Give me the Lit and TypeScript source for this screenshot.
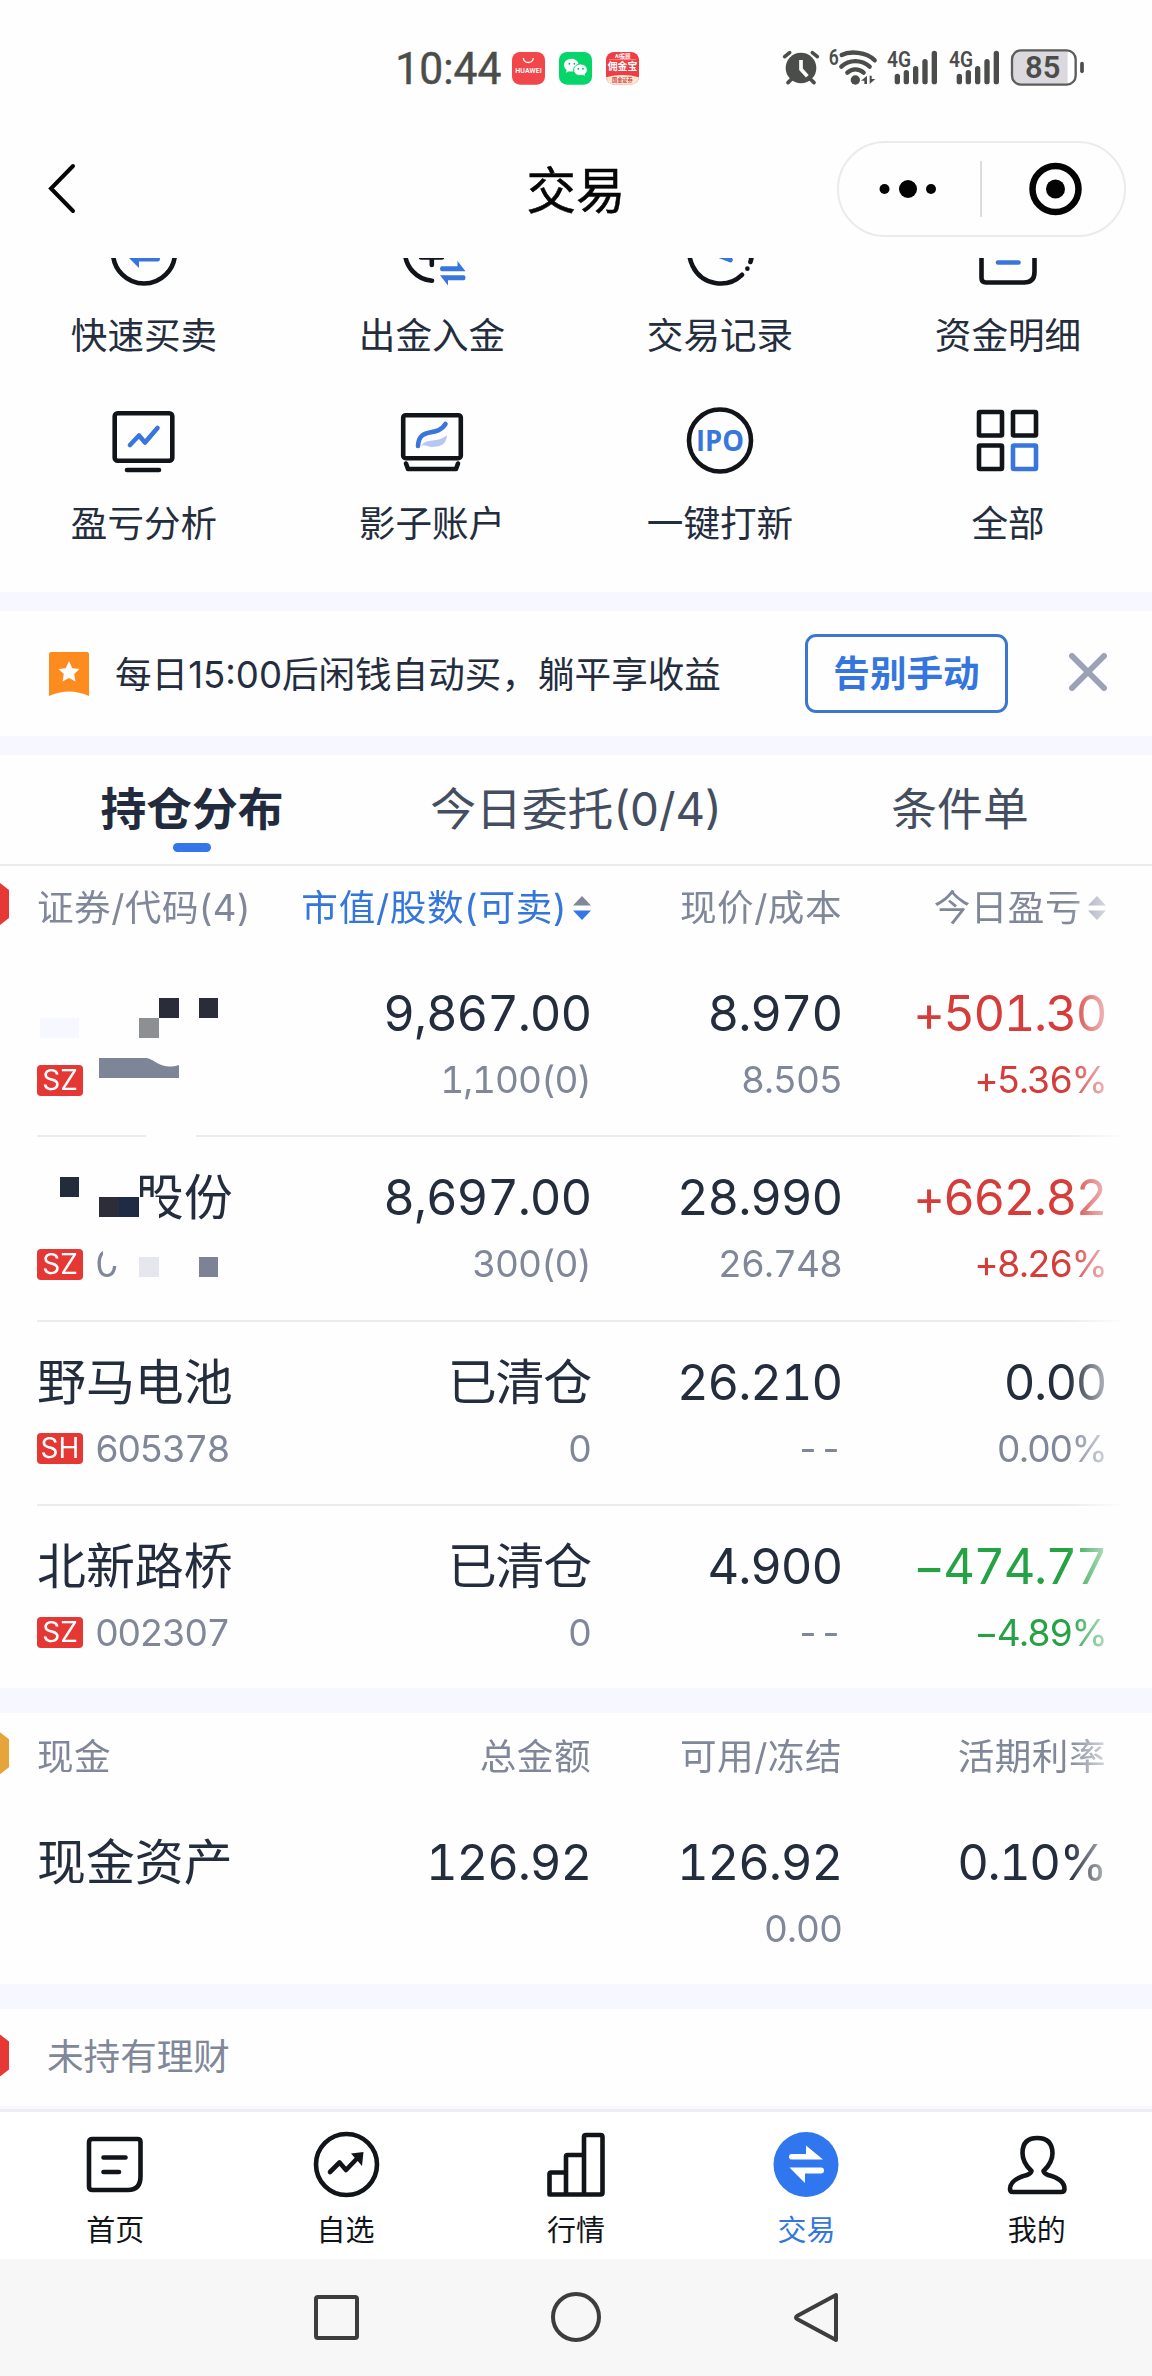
import {css, html, LitElement, nothing, svg, TemplateResult} from 'lit';
import {customElement, property} from 'lit/decorators.js';

type Tone = 'up' | 'down' | 'flat';

interface Holding {
  name: string;
  market: string;
  code: string;
  value: string;
  shares: string;
  price: string;
  cost: string;
  profit: string;
  rate: string;
  tone: Tone;
  mask?: TemplateResult;
}

interface IconLabel {
  label: string;
  icon: TemplateResult;
  active?: boolean;
}

// Coordinates are relative to the top left corner of the row.
const firstMask = svg`
  <rect x="146" y="184" width="50" height="3" fill="#fefefe"></rect>
  <rect x="40" y="67" width="39" height="20" fill="#f7f7ff"></rect>
  <rect x="139" y="67" width="20" height="20" fill="#8c9092"></rect>
  <rect x="159" y="47" width="20" height="20" fill="#2a2c39"></rect>
  <rect x="199" y="47" width="19" height="20" fill="#2a2c39"></rect>
  <path d="M99 107H147C157 110 162 119 179 114V127H99Z" fill="#7d8596"></path>
`;

const secondMask = svg`
  <rect x="134" y="62" width="25" height="30" fill="#fefefe"></rect>
  <rect x="134" y="38" width="6" height="30" fill="#fefefe"></rect>
  <rect x="103" y="108" width="22" height="23" fill="#fefefe"></rect>
  <rect x="60" y="42" width="19" height="20" fill="#222c3a"></rect>
  <rect x="99" y="62" width="20" height="20" fill="#2c2d38"></rect>
  <rect x="119" y="62" width="20" height="20" fill="#1f2a45"></rect>
  <rect x="139" y="122" width="20" height="20" fill="#e6e6ef"></rect>
  <rect x="199" y="122" width="19" height="20" fill="#7d8296"></rect>
`;

const holdings: Holding[] = [
  {
    name: '', market: 'SZ', code: '', value: '9,867.00', shares: '1,100(0)',
    price: '8.970', cost: '8.505', profit: '+501.30', rate: '+5.36%', tone: 'up', mask: firstMask,
  },
  {
    name: '　　股份', market: 'SZ', code: '0', value: '8,697.00', shares: '300(0)',
    price: '28.990', cost: '26.748', profit: '+662.82', rate: '+8.26%', tone: 'up', mask: secondMask,
  },
  {
    name: '野马电池', market: 'SH', code: '605378', value: '已清仓', shares: '0',
    price: '26.210', cost: '--', profit: '0.00', rate: '0.00%', tone: 'flat',
  },
  {
    name: '北新路桥', market: 'SZ', code: '002307', value: '已清仓', shares: '0',
    price: '4.900', cost: '--', profit: '−474.77', rate: '−4.89%', tone: 'down',
  },
];

const shortcuts: IconLabel[] = [
  {
    label: '快速买卖',
    icon: svg`
      <circle cx="36" cy="36.5" r="31"></circle>
      <path class="fill" d="M20 41H50Q52 41 52 43T50 45.5H31V52Z"></path>
    `,
  },
  {
    label: '出金入金',
    icon: svg`
      <path d="M36 6A29.5 29.5 0 0 0 36 64.8M25 41.5H46M35.8 36V49"></path>
      <path class="fill" d="M44 52.7Q44 50.3 46 50.3H61.5V45L69.5 55.2H46Q44 55.2 44 52.7Z"></path>
      <path class="fill" d="M69.5 61.7Q69.5 64.2 67.5 64.2H52V69.5L44 59.3H67.5Q69.5 59.3 69.5 61.7Z"></path>
    `,
  },
  {
    label: '交易记录',
    icon: svg`
      <path d="M58 58.8A31 31 0 1 1 67 42M63.4 52.6V52.7M66.4 46L67.3 43"></path>
      <path class="blue" d="M36 20V40L46.5 44"></path>
    `,
  },
  {
    label: '资金明细',
    icon: svg`
      <path d="M9.5 8H62.5V56Q62.5 66.5 52 66.5H14Q9.5 66.5 9.5 62Z"></path>
      <path class="blue" d="M26 46.5H46.5"></path>
    `,
  },
  {
    label: '盈亏分析',
    icon: svg`
      <rect x="6.7" y="9.2" width="57.6" height="47.6" rx="3"></rect>
      <path d="M19 66H51"></path>
      <path class="blue" d="M22 41L31 31.5L37 38.5L49.5 24"></path>
    `,
  },
  {
    label: '影子账户',
    icon: svg`
      <rect x="7.2" y="11.2" width="57.6" height="43" rx="2.5"></rect>
      <path d="M10 59.5L12 65H60L62 59.5"></path>
      <path fill="#b5c7f2" stroke="none" d="M25 42C31 33 41 40 51 31C50 43 42 42 37 43C31 43 29 40 25 42Z"></path>
      <path class="blue" d="M22 42C23 22 41 34 49.5 20"></path>
    `,
  },
  {
    label: '一键打新',
    icon: svg`
      <circle cx="36" cy="36.5" r="31"></circle>
      <text class="ipo" x="12" y="46.5" textLength="48" lengthAdjust="spacingAndGlyphs">IPO</text>
    `,
  },
  {
    label: '全部',
    icon: svg`
      <rect x="7" y="8" width="23" height="23.5" rx="1"></rect>
      <rect x="41" y="8" width="23" height="23.5" rx="1"></rect>
      <rect x="7" y="41.5" width="23" height="23.5" rx="1"></rect>
      <rect class="blue" x="41" y="41.5" width="23" height="23.5" rx="1"></rect>
    `,
  },
];

const tabs: IconLabel[] = [
  {
    label: '首页',
    icon: svg`
      <path d="M13.5 11H58.5Q61.5 11 61.5 14V48.5Q61.5 62 49 62H13.5Q10 62 10 58.5V14.5Q10 11 13.5 11Z"></path>
      <path d="M24.5 29.5H46.5M24.5 44H40"></path>
    `,
  },
  {
    label: '自选',
    icon: svg`
      <circle cx="36.5" cy="36.5" r="30.5"></circle>
      <path d="M20 44L29.5 34.5L36 42L48 29.5"></path>
      <path class="ink" d="M41 25.5L53.5 24L52 38Z"></path>
    `,
  },
  {
    label: '行情',
    icon: svg`
      <path d="M9.5 66.5V46Q9.5 44.5 11 44.5H26V66.5H11Q9.5 66.5 9.5 65ZM26 66.5V28.5Q26 27 27.5 27H44V66.5ZM44 66.5V9Q44 7 46 7H60.5Q62.5 7 62.5 9V64.5Q62.5 66.5 60.5 66.5Z"></path>
    `,
  },
  {
    label: '交易',
    active: true,
    icon: svg`
      <circle class="disc" cx="36" cy="36.5" r="32.5"></circle>
      <path class="paper" d="M22 26H36V17.5L53 31.5H22Q19 31.5 19 28.7T22 26Z"></path>
      <path class="paper" d="M51 45.5H35V55L19.5 39.5H51Q54 39.5 54 42.5T51 45.5Z"></path>
    `,
  },
  {
    label: '我的',
    icon: svg`
      <path d="M30.5 43C25 38 21.5 32 21.5 25Q21.5 10 36.3 10T51.5 25C51.5 32 48 38 42.5 43C43 45 44.5 46 47 47C57 49.5 63.5 54 63.5 61Q63.5 64 60 64H12Q9 64 9 61C9 54 16 49.5 26 47C28.5 46 30 45 30.5 43Z"></path>
    `,
  },
];

@customElement('phone-status')
export class PhoneStatus extends LitElement {
  static override styles = css`
      :host {
          display: flex;
          height: 120px;
          padding: 40px 0 0 385px;
          box-sizing: border-box;
          gap: 115px;
      }

      svg {
          display: block;
          flex: none;
      }

      text {
          font-family: Roboto, "Noto Sans CJK SC", sans-serif;
      }
  `;

  private signal(x: number) {
    return svg`
      <text x=${x - 24} y="80" font-size="67" font-weight="600" textLength="72" lengthAdjust="spacingAndGlyphs" fill="#4b4d4a">4G</text>
      <path d="M${x + 7} 109V125M${x + 34} 98V125M${x + 62} 86V125M${x + 90} 65V125M${x + 118} 40V125"
        stroke="#4b4d4a" stroke-width="16" stroke-linecap="round"></path>
    `;
  }

  override render() {
    return html`
      <svg width="270" height="60" viewBox="0 0 810 180" fill="none">
        <text x="31" y="132" font-size="133" textLength="318" lengthAdjust="spacingAndGlyphs"
          fill="#4b4d4a" stroke="#4b4d4a" stroke-width="1.5">10:44</text>
        <rect x="381" y="36" width="99" height="98" rx="24" fill="#f2474a"></rect>
        <path d="M415 54C417 72 443 72 445 54" stroke="#fff" stroke-width="4"></path>
        <text x="391" y="99" font-size="21" font-weight="600" textLength="79" fill="#fff">HUAWEI</text>
        <rect x="522" y="36" width="99" height="98" rx="24" fill="#05d66a"></rect>
        <path d="M559 56C546 56 537 65 537 75C537 81 540 86 545 90L543 98L552 94C565 97 581 90 581 75C581 64 571 56 559 56Z" fill="#fff"></path>
        <path d="M587 72C575 72 566 80 566 90C566 103 580 110 593 106L601 110L600 103C605 99 607 95 607 90C607 80 598 72 587 72Z"
          fill="#fff" stroke="#05d66a" stroke-width="3"></path>
        <path d="M553 71V72M568 71V72M580 86V87M594 86V87" stroke="#05b65a" stroke-width="5" stroke-linecap="round"></path>
        <clipPath id="app"><rect x="663" y="36" width="99" height="98" rx="24"></rect></clipPath>
        <g clip-path="url(#app)">
          <rect x="663" y="36" width="99" height="98" fill="#ee3d45"></rect>
          <path d="M663 112Q712 98 762 112V134H663Z" fill="#fbe6d2"></path>
          <text x="690" y="55" font-size="18" font-weight="700" textLength="46" lengthAdjust="spacingAndGlyphs" fill="#fff">AI投顾</text>
          <path d="M672 59H753" stroke="#ffb8a0" stroke-width="2"></path>
          <text x="668" y="91" font-size="31" font-weight="700" textLength="89" lengthAdjust="spacingAndGlyphs" fill="#fff">佣金宝</text>
          <text x="681" y="127" font-size="17" font-weight="700" textLength="62" lengthAdjust="spacingAndGlyphs" fill="#d6494a">国金证券</text>
        </g>
      </svg>
      <svg width="330" height="60" viewBox="0 0 990 180" fill="none">
        <circle cx="93" cy="84" r="46" fill="#4b4d4a"></circle>
        <path d="M44 50L59 38M127 38L142 50M65 117L54 128M121 117L132 128" stroke="#4b4d4a" stroke-width="11" stroke-linecap="round"></path>
        <path d="M93 60V88L112 109" stroke="#fff" stroke-width="11"></path>
        <text x="176" y="76" font-size="67" font-weight="600" textLength="30" lengthAdjust="spacingAndGlyphs" fill="#4b4d4a">6</text>
        <path d="M215 45C240 32 290 36 314 61M214 80C237 58 275 58 299 80M232 98C246 85 266 85 281 98"
          stroke="#4b4d4a" stroke-width="13" stroke-linecap="round"></path>
        <circle cx="256" cy="120" r="14" fill="#4b4d4a"></circle>
        <path d="M291 107V132H283V122H273ZM299 132V107H305V117H316Z" fill="#4b4d4a"></path>
        ${this.signal(375)}
        ${this.signal(561)}
        <rect x="726" y="31" width="190" height="103" rx="27" fill="#fff"></rect>
        <path d="M893 31H753Q726 31 726 58V107Q726 134 753 134H893Z" fill="#dcd9de"></path>
        <rect x="726" y="31" width="191" height="103" rx="27" stroke="#5b5d5a" stroke-width="7"></rect>
        <path d="M936 71V94" stroke="#4b4d4a" stroke-width="11" stroke-linecap="round"></path>
        <text x="765" y="115" font-size="92" font-weight="600" textLength="106" lengthAdjust="spacingAndGlyphs" fill="#4b4d4a">85</text>
      </svg>
    `;
  }
}

@customElement('sort-arrows')
export class SortArrows extends LitElement {
  static override styles = css`
      :host {
          display: block;
          height: 24px;
          margin-top: 6px;
      }

      svg {
          display: block;
      }
  `;

  @property({type: Boolean})
  active = false;

  override render() {
    return html`
      <svg width="18" height="24" viewBox="0 0 18 24">
        <path d="M9 0L18 9.5H0Z" fill=${this.active ? '#7f8799' : '#8c93a3'}></path>
        <path d="M9 24L18 14.5H0Z" fill=${this.active ? '#3476e6' : '#8c93a3'}></path>
      </svg>
    `;
  }
}

@customElement('app-root')
export class AppRoot extends LitElement {
  static override styles = css`
      :host {
          display: flex;
          flex-direction: column;
          width: 1152px;
          height: 2376px;
          overflow: hidden;
          background-color: #fefefe;
          color: #242d3d;
          font-family: Inter, "Noto Sans CJK SC", sans-serif;
          font-size: 36.6px;
          white-space: nowrap;
      }

      svg {
          display: block;
          flex: none;
      }

      .header {
          display: flex;
          align-items: center;
          flex: none;
          height: 138px;
          padding: 0 26px;
          box-sizing: border-box;
      }

      .side {
          flex: 1;
          display: flex;
          padding-left: 10px;
      }

      .side.end {
          justify-content: flex-end;
      }

      .title {
          padding-bottom: 4px;
          font-size: 49.5px;
          -webkit-text-stroke: 0.5px #060606;
          color: #060606;
      }

      .capsule {
          display: flex;
          align-items: center;
          width: 289px;
          height: 96px;
          box-sizing: border-box;
          border: 2px solid #ebebeb;
          border-radius: 48px;
      }

      .content {
          flex: none;
          height: 1848px;
          overflow: hidden;
      }

      .shortcuts {
          display: grid;
          grid-template-columns: repeat(4, 288px);
          grid-auto-rows: 188px;
          margin-top: -42px;
      }

      .shortcut {
          display: flex;
          flex-direction: column;
          align-items: center;
          gap: 24px;
          line-height: 48px;
      }

      .icon {
          fill: none;
          stroke: #11151a;
          stroke-width: 4.6;
          stroke-linecap: round;
          stroke-linejoin: round;
      }

      .blue {
          stroke: #3875dc;
      }

      .fill {
          fill: #3875dc;
          stroke: none;
      }

      .ink {
          fill: #11151a;
          stroke: none;
      }

      .disc {
          fill: #3077ef;
          stroke: none;
      }

      .paper {
          fill: #fff;
          stroke: none;
      }

      .ipo {
          font-family: "Open Sans", sans-serif;
          font-size: 29px;
          font-weight: 700;
          fill: #3875dc;
          stroke: none;
      }

      .band {
          height: 19px;
          background-color: #f6f7ff;
      }

      .band.wide {
          height: 25px;
      }

      .promo {
          display: flex;
          align-items: center;
          height: 125px;
          padding: 0 45px 0 48px;
      }

      .promo-text {
          flex: 1;
          margin-left: 25px;
          padding-top: 2px;
          line-height: 48px;
      }

      .promo-button {
          display: flex;
          align-items: center;
          justify-content: center;
          width: 203px;
          height: 79px;
          padding-bottom: 5px;
          box-sizing: border-box;
          margin-right: 61px;
          border: 3px solid #3a76d2;
          border-radius: 11px;
          color: #3576de;
          font-weight: 700;
      }

      .promo-close {
          margin-bottom: 3px;
      }

      .tabs {
          display: grid;
          grid-template-columns: repeat(3, 384px);
          height: 109px;
          box-shadow: 0 2px #ececee;
      }

      .tab {
          display: flex;
          flex-direction: column;
          align-items: center;
          padding-top: 25px;
          gap: 3px;
          box-sizing: border-box;
          font-size: 45.8px;
          line-height: 60px;
          color: #444e60;
      }

      .tab.selected {
          font-weight: 700;
          color: #222b3d;
      }

      .tab.selected::after {
          content: '';
          width: 38px;
          height: 9px;
          border-radius: 5px;
          background-color: #3476ea;
      }

      .table {
          mask-image: linear-gradient(to right, #000 1068px, transparent 1126px);
      }

      .columns {
          display: grid;
          grid-template-columns: 254px 300px 251px 264px;
          height: 87px;
          padding-left: 37px;
          color: #7f8799;
          letter-spacing: 0.5px;
          position: relative;
      }

      .columns > div {
          display: flex;
          align-items: center;
          justify-content: flex-end;
          height: 82px;
          gap: 6px;
      }

      .columns > div:first-child {
          justify-content: flex-start;
      }

      .columns .sorted {
          color: #3476dc;
          letter-spacing: 0.7px;
      }

      .marker {
          position: absolute;
          left: 0;
          top: 19px;
          width: 9px;
          height: 42px;
          background-color: #e63935;
          clip-path: polygon(0 0, 9px 7px, 9px 35px, 0 100%);
      }

      .marker.gold {
          background-color: #e6a53a;
      }

      .row {
          display: grid;
          grid-template-columns: 254px 300px 251px 264px;
          height: 184.3px;
          padding-left: 37px;
          box-sizing: border-box;
          position: relative;
      }

      .row + .row {
          background: linear-gradient(#ebecee, #ebecee) no-repeat 37px 0 / 100% 2px;
      }

      .cell {
          display: flex;
          flex-direction: column;
          align-items: flex-end;
      }

      .cell.name {
          align-items: flex-start;
      }

      .main {
          height: 60px;
          margin-top: 33px;
          font-size: 48.9px;
          line-height: 60px;
      }

      .sub {
          display: flex;
          align-items: center;
          height: 48px;
          margin-top: 12px;
          font-size: 37px;
          line-height: 48px;
          color: #7f8799;
          letter-spacing: -1px;
      }

      .number {
          font-weight: 375;
          font-variant-numeric: tabular-nums;
      }

      .main.number {
          letter-spacing: -1.1px;
      }

      .cell.profit .main {
          letter-spacing: -1.5px;
      }

      .cell.profit .sub {
          letter-spacing: -1.8px;
      }

      .code {
          letter-spacing: -1.7px;
      }

      .badge {
          width: 46px;
          height: 31px;
          margin-right: 12px;
          border-radius: 4px;
          background-color: #e53733;
          color: #fff;
          font-size: 28px;
          line-height: 31px;
          letter-spacing: 0;
          text-align: center;
      }

      .up {
          color: #d53c3a;
      }

      .down {
          color: #25a244;
      }

      .mask {
          position: absolute;
          left: 0;
          top: 0;
          z-index: 1;
      }

      .empty {
          display: flex;
          align-items: center;
          height: 98px;
          padding: 0 0 7px 47px;
          box-sizing: border-box;
          color: #7f8799;
          position: relative;
      }

      .empty .marker {
          top: 25px;
      }

      .tabbar {
          display: grid;
          grid-template-columns: repeat(5, 1fr);
          flex: none;
          height: 153px;
          border-top: 3px solid #f6f7ff;
          box-sizing: border-box;
          background-color: #fff;
          box-shadow: inset 0 3px #efedf3;
      }

      .tabbar-item {
          display: flex;
          flex-direction: column;
          align-items: center;
          padding-top: 19px;
          gap: 11px;
          font-size: 29px;
          line-height: 40px;
          color: #11151a;
      }

      .tabbar-item.active {
          color: #3476dc;
      }

      .system {
          display: flex;
          justify-content: center;
          gap: 168px;
          flex: none;
          height: 117px;
          padding-top: 22px;
          box-sizing: border-box;
          background-color: #f7f7f7;
      }

      .system svg {
          fill: none;
          stroke: #3d3d3b;
          stroke-width: 4;
          stroke-linejoin: round;
      }
  `;

  private renderIcon(icon: TemplateResult) {
    return html`<svg class="icon" width="72" height="72" viewBox="0 0 72 72">${icon}</svg>`;
  }

  private renderHolding(item: Holding) {
    const tone = item.tone === 'flat' ? '' : item.tone;
    return html`
      <div class="row">
        <div class="cell name">
          <div class="main">${item.name}</div>
          <div class="sub number"><span class="badge">${item.market}</span><span class="code">${item.code}</span></div>
        </div>
        <div class="cell">
          <div class="main number">${item.value}</div>
          <div class="sub number">${item.shares}</div>
        </div>
        <div class="cell">
          <div class="main number">${item.price}</div>
          <div class="sub number">${item.cost}</div>
        </div>
        <div class="cell profit">
          <div class="main number ${tone}">${item.profit}</div>
          <div class="sub number ${tone}">${item.rate}</div>
        </div>
        ${item.mask
          ? html`<svg class="mask" width="240" height="187" viewBox="0 0 240 187">${item.mask}</svg>`
          : nothing}
      </div>
    `;
  }

  override render() {
    return html`
      <phone-status></phone-status>
      <div class="header">
        <div class="side">
          <svg width="50" height="60" viewBox="0 0 50 60" fill="none" stroke="#060606" stroke-width="4" stroke-linecap="round">
            <path d="M37 7L15 29.5L37 52"></path>
          </svg>
        </div>
        <div class="title">交易</div>
        <div class="side end">
          <div class="capsule">
            <svg width="285" height="92" viewBox="0 0 285 92" fill="#040404">
              <circle cx="45.5" cy="46" r="5"></circle>
              <circle cx="69" cy="46" r="9"></circle>
              <circle cx="92" cy="46" r="5"></circle>
              <rect x="141" y="18" width="2" height="56" fill="#dcdcdc"></rect>
              <circle cx="216.5" cy="46" r="23" fill="none" stroke="#040404" stroke-width="6.5"></circle>
              <circle cx="216.5" cy="46" r="9.5"></circle>
            </svg>
          </div>
        </div>
      </div>
      <div class="content">
        <div class="shortcuts">
          ${shortcuts.map((item) => html`
            <div class="shortcut">
              ${this.renderIcon(item.icon)}
              <span>${item.label}</span>
            </div>
          `)}
        </div>
        <div class="band"></div>
        <div class="promo">
          <svg width="42" height="44" viewBox="0 0 42 44">
            <path d="M3 0H39Q41 0 41 2V44Q21 35 1 44V2Q1 0 3 0Z" fill="#fe8b1d"></path>
            <path d="M21 9L24.3 16.2L31.5 17L26.2 22L27.5 29.5L21 26L14.5 29.5L15.8 22L10.5 17L17.7 16.2Z" fill="#fff"></path>
          </svg>
          <span class="promo-text">每日15:00后闲钱自动买，躺平享收益</span>
          <span class="promo-button">告别手动</span>
          <svg class="promo-close" width="38" height="38" viewBox="0 0 38 38" stroke="#9ca2b6" stroke-width="6" stroke-linecap="round">
            <path d="M3 3L35 35M35 3L3 35"></path>
          </svg>
        </div>
        <div class="band"></div>
        <div class="tabs">
          <div class="tab selected">持仓分布</div>
          <div class="tab">今日委托(0/4)</div>
          <div class="tab">条件单</div>
        </div>
        <div class="table">
          <div class="columns">
            <div>证券/代码(4)</div>
            <div class="sorted">市值/股数(可卖)<sort-arrows active></sort-arrows></div>
            <div>现价/成本</div>
            <div>今日盈亏<sort-arrows></sort-arrows></div>
            <i class="marker"></i>
          </div>
          ${holdings.map((item) => this.renderHolding(item))}
        </div>
        <div class="band wide"></div>
        <div class="table">
          <div class="columns">
            <div>现金</div>
            <div>总金额</div>
            <div>可用/冻结</div>
            <div>活期利率</div>
            <i class="marker gold"></i>
          </div>
          <div class="row">
            <div class="cell name"><div class="main">现金资产</div></div>
            <div class="cell"><div class="main number">126.92</div></div>
            <div class="cell">
              <div class="main number">126.92</div>
              <div class="sub number">0.00</div>
            </div>
            <div class="cell profit"><div class="main number">0.10%</div></div>
          </div>
        </div>
        <div class="band wide"></div>
        <div class="empty"><i class="marker"></i>未持有理财</div>
      </div>
      <div class="tabbar">
        ${tabs.map((item) => html`
          <div class="tabbar-item ${item.active ? 'active' : ''}">
            ${this.renderIcon(item.icon)}
            <span>${item.label}</span>
          </div>
        `)}
      </div>
      <div class="system">
        <svg width="72" height="72" viewBox="0 0 72 72"><rect x="16" y="16" width="41" height="41" rx="2"></rect></svg>
        <svg width="72" height="72" viewBox="0 0 72 72"><circle cx="36" cy="36" r="23"></circle></svg>
        <svg width="72" height="72" viewBox="0 0 72 72"><path d="M56 14V59L17 38Q15 36.5 17 35Z"></path></svg>
      </div>
    `;
  }
}

declare global {
  interface HTMLElementTagNameMap {
    'app-root': AppRoot;
    'phone-status': PhoneStatus;
    'sort-arrows': SortArrows;
  }
}
